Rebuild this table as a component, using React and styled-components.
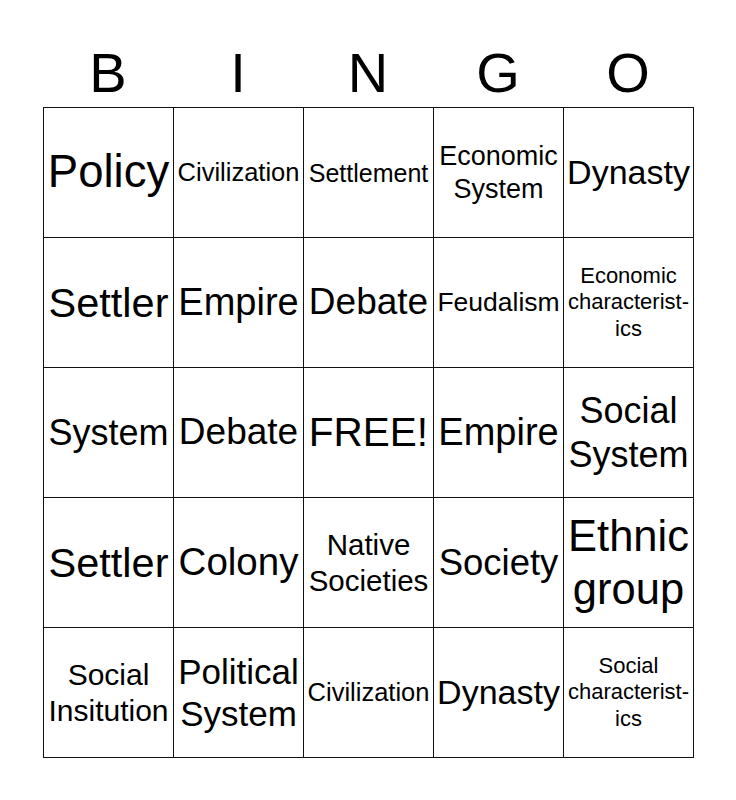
import React from 'react';
import styled, { createGlobalStyle } from 'styled-components';

const GlobalStyle = createGlobalStyle`
  body {
    margin: 0;
    background: #ffffff;
    font-family: "Liberation Sans", Arial, sans-serif;
    color: #000;
  }
`;

const Board = styled.div`
  width: 651px;
  padding-left: 43px;
`;

const Header = styled.div`
  display: grid;
  grid-template-columns: repeat(5, 130px);
  height: 107px;
  padding-top: 45px;
  box-sizing: border-box;
`;

const Letter = styled.div`
  text-align: center;
  font-size: 56px;
  line-height: 1;
`;

const Grid = styled.div`
  display: grid;
  grid-template-columns: repeat(5, 129px);
  grid-auto-rows: 129px;
  gap: 1px;
  padding: 1px;
  background: #111;
  width: fit-content;
`;

const Cell = styled.div`
  background: #fff;
  display: flex;
  flex-direction: column;
  align-items: center;
  justify-content: center;
  text-align: center;
  font-size: ${props => props.size}px;
  line-height: 1.2;
  white-space: nowrap;
`;

const cells = [
  [['Policy'], 45.5], [['Civilization'], 25.5], [['Settlement'], 25], [['Economic', 'System'], 27], [['Dynasty'], 34],
  [['Settler'], 41.5], [['Empire'], 38], [['Debate'], 37], [['Feudalism'], 26.5], [['Economic', 'characterist-', 'ics'], 22],
  [['System'], 36], [['Debate'], 37], [['FREE!'], 40.5], [['Empire'], 38], [['Social', 'System'], 36],
  [['Settler'], 41.5], [['Colony'], 38.5], [['Native', 'Societies'], 29.5], [['Society'], 36.5], [['Ethnic', 'group'], 43.5],
  [['Social', 'Insitution'], 30], [['Political', 'System'], 35], [['Civilization'], 25.5], [['Dynasty'], 34], [['Social', 'characterist-', 'ics'], 22],
];

export default function App() {
  return (
    <>
      <GlobalStyle />
      <Board>
        <Header>
          {['B', 'I', 'N', 'G', 'O'].map(l => <Letter key={l}>{l}</Letter>)}
        </Header>
        <Grid>
          {cells.map(([lines, size], i) => (
            <Cell key={i} size={size}>
              {lines.map((t, j) => <span key={j}>{t}</span>)}
            </Cell>
          ))}
        </Grid>
      </Board>
    </>
  );
}
